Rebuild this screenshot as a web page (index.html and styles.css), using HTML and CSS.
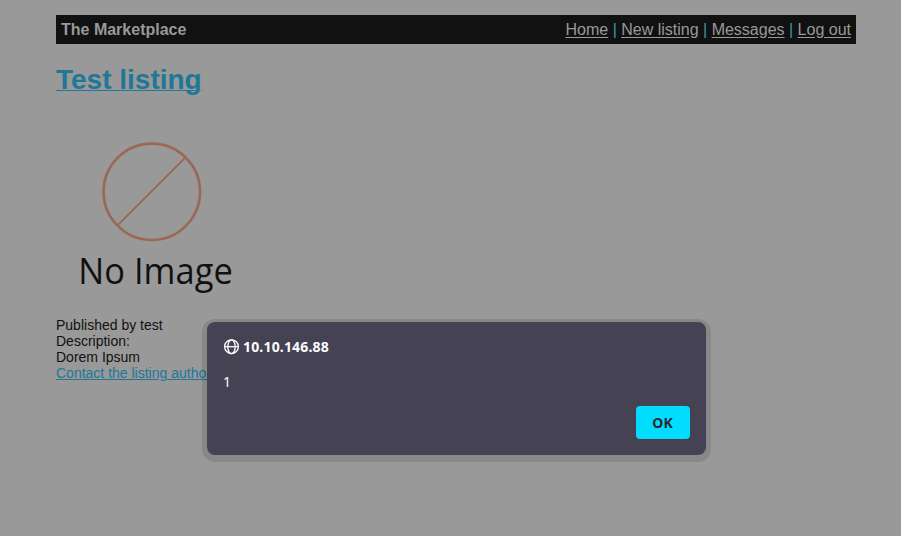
FILE: index.html
```html
<!DOCTYPE html>
<html lang="en">
<head>
<meta charset="utf-8">
<title>The Marketplace</title>
<link rel="stylesheet" href="styles.css">
</head>
<body>
<main class="page">
  <header class="bar">
    <strong>The Marketplace</strong>
    <nav><a href="#">Home</a> | <a href="#">New listing</a> | <a href="#">Messages</a> | <a href="#">Log out</a></nav>
  </header>
  <h1 class="title"><a href="#">Test listing</a></h1>
  <svg class="photo" width="192" height="192" viewBox="0 0 192 192">
    <g fill="none" stroke="#9a6956">
      <circle cx="95.8" cy="71.8" r="48.2" stroke-width="2.7"/>
      <path d="M61.5 105.5L129.5 37.5" stroke-width="1.8"/>
    </g>
    <text x="22.3" y="164" textLength="154.5" lengthAdjust="spacingAndGlyphs">No Image</text>
  </svg>
  <div class="details">
    <div>Published by test</div>
    <div>Description:</div>
    <div>Dorem Ipsum</div>
    <a href="#">Contact the listing author</a>
  </div>
</main>
<section class="dialog" role="alertdialog">
  <div class="origin">
    <svg width="17" height="16" viewBox="0 0 17 16" fill="none" stroke="#fbfbfe" stroke-width="1.3">
      <circle cx="8.5" cy="7.7" r="6.9"/>
      <ellipse cx="8.5" cy="7.7" rx="3.7" ry="6.9"/>
      <path d="M1.6 7.7H15.4"/>
    </svg>
    <span>10.10.146.88</span>
  </div>
  <p class="message">1</p>
  <button class="ok">OK</button>
</section>
</body>
</html>
```
FILE: styles.css
```css
* { box-sizing: border-box; }
body {
  margin: 0;
  height: 536px;
  overflow: hidden;
  background: #999;
  color: #111;
  font: 14px/16px "Liberation Sans", Arial, sans-serif;
}
.page { width: 800px; margin: 15px 0 0 56px; }
.bar {
  display: flex;
  justify-content: space-between;
  align-items: center;
  height: 29px;
  padding: 0 5px;
  background: #111;
  color: #999;
  font-size: 16px;
  line-height: 18px;
}
.bar nav { color: #4692ae; }
.bar a { color: #999; text-underline-offset: 2px; }
.title { margin: 20px 0 0; font-size: 28px; line-height: 32px; }
.title a, .details a { color: #207798; }
.title a { text-decoration-thickness: 1px; text-underline-offset: 1px; }
.photo { display: block; margin-top: 24px; }
.photo text { font: 37px "Open Sans", sans-serif; fill: #111; }
.details { margin-top: 5px; }
.dialog {
  position: absolute;
  left: 207px;
  top: 322px;
  width: 499px;
  height: 133px;
  padding: 16px;
  display: flex;
  flex-direction: column;
  border-radius: 8px;
  background: #454353;
  box-shadow: 0 2px 0 5px rgba(0, 0, 0, 0.11);
  color: #fbfbfe;
  font: 14px/20px "Noto Sans", sans-serif;
}
.origin {
  display: flex;
  align-items: center;
  gap: 3px;
  height: 18px;
  font-weight: 700;
  letter-spacing: 0.17px;
}
.message { margin: 16px 0 0; }
.ok {
  align-self: flex-end;
  width: 54px;
  height: 33px;
  margin-top: 14px;
  padding: 0 1px 0 0;
  border: 0;
  border-radius: 4px;
  background: #00ddff;
  color: #2b2a33;
  font: 700 14px/20px "Noto Sans", sans-serif;
}
```
